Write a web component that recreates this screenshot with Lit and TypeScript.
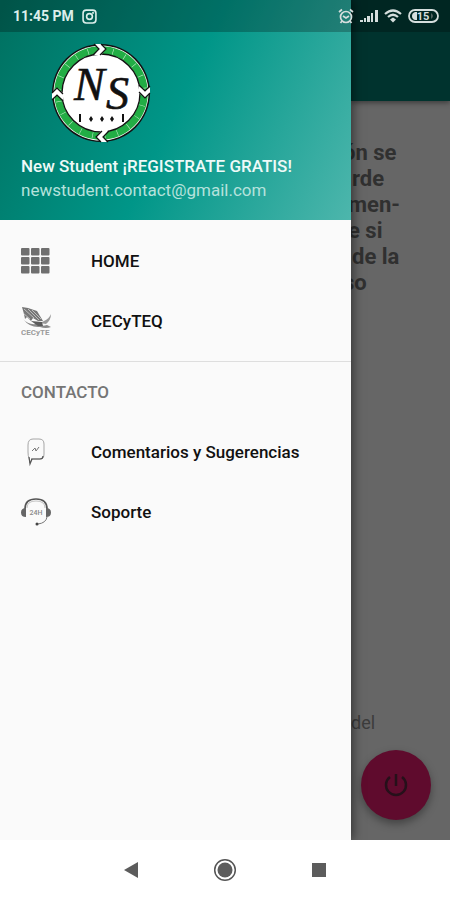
import { LitElement, html, css, svg } from "lit";
import { customElement, property } from "lit/decorators.js";

const icons = {
  grid: svg`<svg viewBox="0 0 30 30" aria-hidden="true"><g fill="#6f6f6f">
    ${[2, 11, 20].map((y) => [0, 10, 20].map((x) => svg`<rect x=${x} y=${y} width="8.500" height="7.500" rx="1"/>`))}
  </g></svg>`,
  eagle: svg`<svg viewBox="0 0 30 30" aria-hidden="true">
    <path d="M1 1 L7 2 L16 5 L19 10 L22 15 L17 15 L12 12 L10 15 L6 11 L4 13 L3 8 Z" fill="#777"/>
    <path d="M3 3 L13 12 M7 3 L18 14 M11 4 L20 13 M2 7 L9 13" stroke="#ddd" stroke-width="0.7"/>
    <path d="M2 13 Q7 19 15 18 Q21 21 26 19 L30 21 Q25 23 19 21 Q9 22 2 13 Z" fill="#8a8a8a"/>
    <path d="M30 8 Q28 13 23 15 L19 17 L25 18 Q30 14 30 8 Z" fill="#9a9a9a"/>
    <path d="M10 15 L17 20 L22 20 L21 16 Z" fill="#5c5c5c"/>
    <text x="0" y="29" font-size="8" font-weight="700" fill="#9c9c9c" font-family="Roboto, sans-serif">CECyTE</text>
  </svg>`,
  comment: svg`<svg viewBox="0 0 30 30" aria-hidden="true" fill="none">
    <path d="M7 8 Q7 2 12 2 H18 Q23 2 23 7 V17 Q23 22 19 22 H11 L9 26 L8 21 Q7 19 7 15 Z" stroke="#a6a6a6"/>
    <path d="M10 22 H19 Q22 22 22 19 M8 20 L9 27 L11 22" stroke="#555" stroke-width="1.2"/>
    <path d="M11 14 L14 11 L15 14 L18 10" stroke="#777"/>
  </svg>`,
  headset: svg`<svg viewBox="0 0 30 30" aria-hidden="true" fill="none">
    <path d="M4 12 Q4 2 15 2 T26 12" stroke="#555" stroke-width="1.7"/>
    <path d="M6 11 Q6 4 15 4 T24 11" stroke="#aaa" stroke-width="0.7"/>
    <path d="M5 11 V20 Q0 20 0 15.500 Q0 11 5 11 Z M25 11 V20 Q30 20 30 15.500 Q30 11 25 11 Z" fill="#666"/>
    <path d="M26 20 Q25 26 17 27" stroke="#777"/>
    <circle cx="16" cy="27" r="1.500" fill="#444"/>
    <text x="15" y="18" text-anchor="middle" font-size="7" fill="#888" font-family="Roboto, sans-serif">24H</text>
  </svg>`,
};

type IconName = keyof typeof icons;

@customElement("drawer-item")
export class DrawerItem extends LitElement {
  @property() icon: IconName = "grid";
  @property() label = "";

  static styles = css`
    :host { display: block; }
    .item {
      display: flex;
      align-items: center;
      gap: 40px;
      height: 60px;
      padding: 0 21px;
      color: #111;
      font-size: 17px;
      font-weight: 500;
      text-decoration: none;
    }
    .icon { flex: none; width: 30px; height: 30px; }
    .icon svg { display: block; width: 100%; height: 100%; }
  `;

  render() {
    return html`<a class="item" href="#"><span class="icon">${icons[this.icon]}</span>${this.label}</a>`;
  }
}

const chevron = (angle: number) => svg`
  <g transform="rotate(${angle} 50 50)">
    <path d="M44 1 H50 L55 6 L50 12 H43 L48 6 Z" fill="#fff"/>
    <path d="M43 1 L48 6 L42 12 M50 1 L55 6 L49 12" fill="none" stroke="#111" stroke-width="1.200"/>
  </g>`;

const brandLogo = svg`
  <svg class="logo" viewBox="0 0 100 100" role="img" aria-label="New Student">
    <circle cx="50" cy="50" r="49" fill="#111"/>
    <circle cx="50" cy="50" r="47.500" fill="#fff"/>
    <circle cx="50" cy="50" r="43" fill="none" stroke="#22ad45" stroke-width="7.500"/>
    <circle cx="50" cy="50" r="39" fill="#fff" stroke="#111" stroke-width="1.300"/>
    <circle cx="50" cy="50" r="43" fill="none" stroke="#b8e8c2" stroke-width="6" stroke-dasharray="0.600 12"/>
    ${[0, 90, 180, 270].map(chevron)}
    <g font-family="Liberation Serif, serif" font-style="italic" fill="#111" stroke="#111" stroke-width="0.600">
      <text x="23" y="57" font-size="46">N</text>
      <text x="55" y="66" font-size="46">S</text>
    </g>
    <path d="M29 71 V79 M72 71 V79" stroke="#111" stroke-width="2"/>
    <path d="M40 73 l2 3 l-2 3 l-2 -3 Z M51 73 l2 3 l-2 3 l-2 -3 Z M61 73 l2 3 l-2 3 l-2 -3 Z" fill="#111"/>
  </svg>`;

@customElement("app-root")
export class AppRoot extends LitElement {
  static styles = css`
    :host {
      display: flex;
      flex-direction: column;
      min-height: 100vh;
      position: relative;
      overflow: hidden;
      background: #fff;
      font-family: Roboto, sans-serif;
    }
    .stage {
      flex: 1;
      display: grid;
      grid-template-columns: minmax(0, 1fr) 99px;
      position: relative;
    }
    .status {
      position: absolute;
      inset: 0 0 auto 0;
      z-index: 3;
      display: flex;
      align-items: center;
      gap: 8px;
      height: 32px;
      box-sizing: border-box;
      padding: 0 11px 0 13px;
      background: rgba(0, 0, 0, 0.25);
      color: #dcefeb;
      font-size: 14px;
      font-weight: 700;
    }
    .status svg { display: block; flex: none; }
    .signals { display: flex; align-items: center; gap: 6px; margin-left: auto; }

    .drawer {
      z-index: 2;
      background: #fafafa;
      box-shadow: 2px 0 10px rgba(0, 0, 0, 0.5);
    }
    .header {
      height: 220px;
      box-sizing: border-box;
      padding: 43px 21px 0;
      background: linear-gradient(115deg, #007060, #009688 50%, #4db6ac);
    }
    .logo { display: block; width: 100px; height: 100px; margin-left: 30px; }
    .name, .mail { margin: 0; line-height: 24px; font-size: 17px; white-space: nowrap; }
    .name { padding-top: 11px; color: #eefaf8; font-weight: 500; }
    .mail { color: #b5e2dc; }
    .group { padding: 11px 0 10px; }
    .contact { padding: 0; border-top: 1px solid #dedede; }
    .title {
      margin: 0;
      padding: 0 21px;
      font-size: 17px;
      font-weight: 500;
      line-height: 60px;
      color: #757575;
    }

    .page {
      z-index: 1;
      display: flex;
      flex-direction: column;
      background: #666;
      color: #303030;
    }
    .toolbar {
      height: 101px;
      background: #00332e;
      box-shadow: 0 2px 5px rgba(0, 0, 0, 0.4);
    }
    .intro {
      margin: 39px 0 0 -8px;
      font-size: 22px;
      font-weight: 700;
      line-height: 26px;
      white-space: nowrap;
    }
    .line { display: block; }
    .near { padding-left: 5px; }
    .far { padding-left: 9px; }
    .note { margin: auto 0 15px; font-size: 18px; line-height: 24px; color: #3c3c3c; }
    .fab {
      display: grid;
      place-items: center;
      width: 70px;
      height: 70px;
      margin: 0 0 20px 10px;
      padding: 0;
      border: 0;
      border-radius: 50%;
      background: #5f0b2d;
      box-shadow: 0 4px 8px rgba(0, 0, 0, 0.35);
    }

    .nav {
      position: relative;
      z-index: 4;
      display: flex;
      align-items: center;
      justify-content: center;
      gap: 64px;
      height: 60px;
      background: #fff;
    }
    .key { display: grid; place-items: center; width: 30px; height: 30px; padding: 0; border: 0; background: none; }
  `;

  render() {
    return html`
      <div class="status">
        <span>11:45 PM</span>
        <svg width="15" height="15" viewBox="0 0 14 14" fill="none" stroke="#dcefeb" stroke-width="1.5" aria-hidden="true">
          <rect x="1" y="1" width="12" height="12" rx="3"/><circle cx="7" cy="7" r="2.7"/><circle cx="10.300" cy="3.700" r="0.300"/>
        </svg>
        <div class="signals" aria-hidden="true">
          <svg width="16" height="16" viewBox="0 0 16 16" fill="none" stroke="#d5dedd" stroke-width="1.7">
            <circle cx="8" cy="9" r="5.500"/><path d="M1 4 L4 1.500 M15 4 L12 1.500 M5 8 L8 10 L11 8 M4 13 L2.500 15 M12 13 L13.500 15"/>
          </svg>
          <svg width="18" height="14" viewBox="0 0 18 14" fill="#d5dedd">
            <path d="M0 11h3v2H0z M4 9h2v4H4z M7 7h3v6H7z M11 4h2v9h-2z M15 1h3v12h-3z"/>
          </svg>
          <svg width="18" height="14" viewBox="0 0 18 14" fill="none" stroke="#d5dedd" stroke-width="2.200">
            <path d="M1 5 Q9 -2 17 5 M4 8 Q9 3.500 14 8"/><path d="M9 8.500 L12 10.500 L9 13.500 L6 10.500 Z" fill="#d5dedd" stroke="none"/>
          </svg>
          <svg width="31" height="14" viewBox="0 0 31 14">
            <rect x="1" y="1" width="29" height="12" rx="6" fill="none" stroke="#d5dedd" stroke-width="1.800"/>
            <path d="M7 3 H9 V11 H7 Q4 10 4 7 T7 3 Z" fill="#d5dedd"/>
            <text x="15" y="11" text-anchor="middle" font-size="11" font-weight="700" fill="#d5dedd">15</text>
            <path d="M23 4 Q27 7 23 10 Z" fill="#526461"/>
          </svg>
        </div>
      </div>

      <div class="stage">
        <aside class="drawer">
          <header class="header">
            ${brandLogo}
            <p class="name">New Student ¡REGISTRATE GRATIS!</p>
            <p class="mail">newstudent.contact@gmail.com</p>
          </header>
          <nav class="group">
            <drawer-item icon="grid" label="HOME"></drawer-item>
            <drawer-item icon="eagle" label="CECyTEQ"></drawer-item>
          </nav>
          <nav class="group contact">
            <h2 class="title">CONTACTO</h2>
            <drawer-item icon="comment" label="Comentarios y Sugerencias"></drawer-item>
            <drawer-item icon="headset" label="Soporte"></drawer-item>
          </nav>
        </aside>
        <main class="page">
          <div class="toolbar"></div>
          <p class="intro">
            <span class="line">ón se</span>
            <span class="line far">rde</span>
            <span class="line near">men-</span>
            <span class="line near">e si</span>
            <span class="line far">de la</span>
            <span class="line">so</span>
          </p>
          <p class="note">del</p>
          <button class="fab" aria-label="Salir">
            <svg width="26" height="26" viewBox="0 0 26 26" fill="none" stroke="#26101a" stroke-width="2.500" aria-hidden="true">
              <path d="M13 2 V14 M7 5 A10 10 0 1 0 19 5"/>
            </svg>
          </button>
        </main>
      </div>

      <div class="nav">
        <button class="key" aria-label="Atrás">
          <svg width="16" height="18" viewBox="0 0 16 18"><path d="M1 9 L15 1 V17 Z" fill="#5c5c5c"/></svg>
        </button>
        <button class="key" aria-label="Inicio">
          <svg width="24" height="24" viewBox="0 0 24 24">
            <circle cx="12" cy="12" r="10.300" fill="none" stroke="#555" stroke-width="1.500"/><circle cx="12" cy="12" r="7.500" fill="#5c5c5c"/>
          </svg>
        </button>
        <button class="key" aria-label="Recientes">
          <svg width="16" height="16" viewBox="0 0 16 16"><path d="M1 1 H15 V15 H1 Z" fill="#5c5c5c"/></svg>
        </button>
      </div>
    `;
  }
}
